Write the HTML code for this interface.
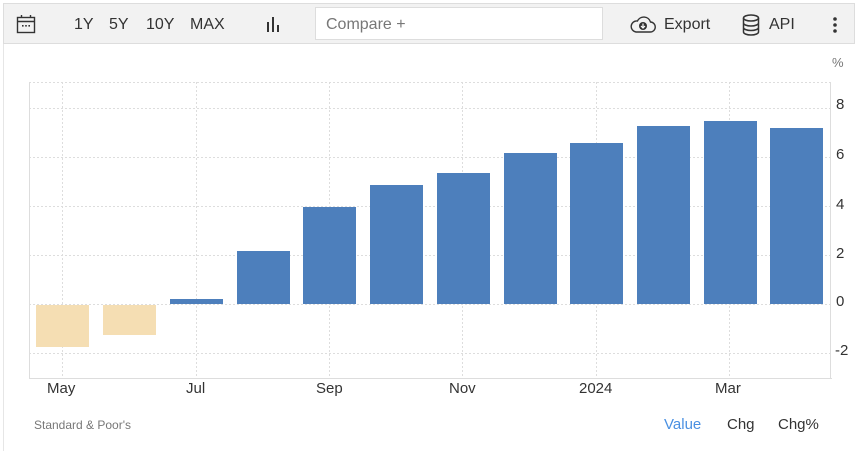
<!DOCTYPE html>
<html><head><meta charset="utf-8"><style>
body{margin:0;width:858px;height:451px;background:#fff;font-family:"Liberation Sans",Arial,sans-serif;position:relative;overflow:hidden}
.tb{position:absolute;left:3px;top:3px;width:852px;height:41px;background:#f2f2f2;border:1px solid #ddd;box-sizing:border-box}
.t{position:absolute;font-size:16px;color:#333;top:16px}
.cmp{position:absolute;left:315px;top:7px;width:288px;height:33px;background:#fff;border:1px solid #ddd;box-sizing:border-box;font-size:16px;color:#777;padding:8px 10px}
.lb{position:absolute;left:3px;top:44px;width:1px;height:407px;background:#e6e6e6}
.ax{position:absolute;font-size:15px;color:#333}
</style></head><body>
<div class="tb"></div>
<svg style="position:absolute;left:16px;top:14px" width="20" height="20" viewBox="0 0 20 20"><rect x="1.5" y="3.5" width="17" height="15" fill="none" stroke="#333" stroke-width="1.4"/><line x1="1.5" y1="7.5" x2="18.5" y2="7.5" stroke="#333" stroke-width="1.4"/><line x1="5.5" y1="1" x2="5.5" y2="4" stroke="#333" stroke-width="1.4"/><line x1="14.5" y1="1" x2="14.5" y2="4" stroke="#333" stroke-width="1.4"/><rect x="6" y="11" width="1.6" height="1.6" fill="#333"/><rect x="9.2" y="11" width="1.6" height="1.6" fill="#333"/><rect x="12.4" y="11" width="1.6" height="1.6" fill="#333"/></svg>
<div class="t" style="left:74px">1Y</div><div class="t" style="left:109px">5Y</div><div class="t" style="left:146px">10Y</div><div class="t" style="left:190px">MAX</div>
<svg style="position:absolute;left:266px;top:16px" width="16" height="16"><rect x="1" y="6" width="2" height="10" fill="#333"/><rect x="6" y="1" width="2" height="15" fill="#333"/><rect x="11" y="9" width="2" height="7" fill="#333"/></svg>
<div class="cmp">Compare +</div>
<svg style="position:absolute;left:630px;top:15px" width="26" height="19" viewBox="0 0 26 19"><path d="M6 17 H20 A5 5 0 0 0 20.5 7 A7 7 0 0 0 7.5 6 A5.5 5.5 0 0 0 6 17 Z" fill="none" stroke="#333" stroke-width="1.4"/><circle cx="13" cy="11" r="4" fill="#333"/><path d="M13 8.5 V13 M11 11 L13 13 L15 11" stroke="#fff" stroke-width="1.2" fill="none"/></svg>
<div class="t" style="left:664px">Export</div>
<svg style="position:absolute;left:742px;top:14px" width="18" height="22" viewBox="0 0 18 22"><ellipse cx="9" cy="4" rx="7.5" ry="3" fill="none" stroke="#333" stroke-width="1.5"/><path d="M1.5 4 V18 A7.5 3 0 0 0 16.5 18 V4 M1.5 9 A7.5 3 0 0 0 16.5 9 M1.5 13.5 A7.5 3 0 0 0 16.5 13.5" fill="none" stroke="#333" stroke-width="1.5"/></svg>
<div class="t" style="left:769px">API</div>
<svg style="position:absolute;left:832px;top:16px" width="6" height="18"><circle cx="3" cy="3" r="1.8" fill="#333"/><circle cx="3" cy="9" r="1.8" fill="#333"/><circle cx="3" cy="15" r="1.8" fill="#333"/></svg>
<div class="lb"></div>
<div class="ax" style="left:832px;top:55px;color:#777;font-size:13px">%</div>
<svg style="position:absolute;left:0;top:0" width="858" height="451">
<g stroke="#ddd" stroke-dasharray="2,2" stroke-width="1">
<line x1="29" y1="82.5" x2="830" y2="82.5"/><line x1="29" y1="108.5" x2="830" y2="108.5"/><line x1="29" y1="157.5" x2="830" y2="157.5"/><line x1="29" y1="206.5" x2="830" y2="206.5"/><line x1="29" y1="255.5" x2="830" y2="255.5"/><line x1="29" y1="304.5" x2="830" y2="304.5"/><line x1="29" y1="353.5" x2="830" y2="353.5"/>
<line x1="62.5" y1="82" x2="62.5" y2="378"/><line x1="196.5" y1="82" x2="196.5" y2="378"/><line x1="329.5" y1="82" x2="329.5" y2="378"/><line x1="462.5" y1="82" x2="462.5" y2="378"/><line x1="596.5" y1="82" x2="596.5" y2="378"/><line x1="729.5" y1="82" x2="729.5" y2="378"/>
</g>
<line x1="29.5" y1="82" x2="29.5" y2="378" stroke="#ddd"/><line x1="29" y1="378.5" x2="832" y2="378.5" stroke="#ddd"/><line x1="830.5" y1="82" x2="830.5" y2="378" stroke="#ddd"/>
<g fill="#f5deb3"><rect x="36" y="305" width="53" height="42"/><rect x="103" y="305" width="53" height="30"/></g>
<g fill="#4d7fbc"><rect x="170" y="299" width="53" height="5"/><rect x="237" y="251" width="53" height="53"/><rect x="303" y="207" width="53" height="97"/><rect x="370" y="185" width="53" height="119"/><rect x="437" y="173" width="53" height="131"/><rect x="504" y="153" width="53" height="151"/><rect x="570" y="143" width="53" height="161"/><rect x="637" y="126" width="53" height="178"/><rect x="704" y="121" width="53" height="183"/><rect x="770" y="128" width="53" height="176"/></g>
</svg>
<div class="ax" style="left:836px;top:96px">8</div><div class="ax" style="left:836px;top:146px">6</div><div class="ax" style="left:836px;top:196px">4</div><div class="ax" style="left:836px;top:245px">2</div><div class="ax" style="left:836px;top:293px">0</div><div class="ax" style="left:835px;top:342px">-2</div>
<div class="ax" style="left:47px;top:380px">May</div><div class="ax" style="left:186px;top:380px">Jul</div><div class="ax" style="left:316px;top:380px">Sep</div><div class="ax" style="left:449px;top:380px">Nov</div><div class="ax" style="left:579px;top:380px">2024</div><div class="ax" style="left:715px;top:380px">Mar</div>
<div class="ax" style="left:34px;top:418px;font-size:12px;color:#777">Standard &amp; Poor's</div>
<div class="ax" style="left:664px;top:416px;font-size:15px;color:#4a90e2">Value</div><div class="ax" style="left:727px;top:416px;font-size:15px">Chg</div><div class="ax" style="left:778px;top:416px;font-size:15px">Chg%</div>
</body></html>
